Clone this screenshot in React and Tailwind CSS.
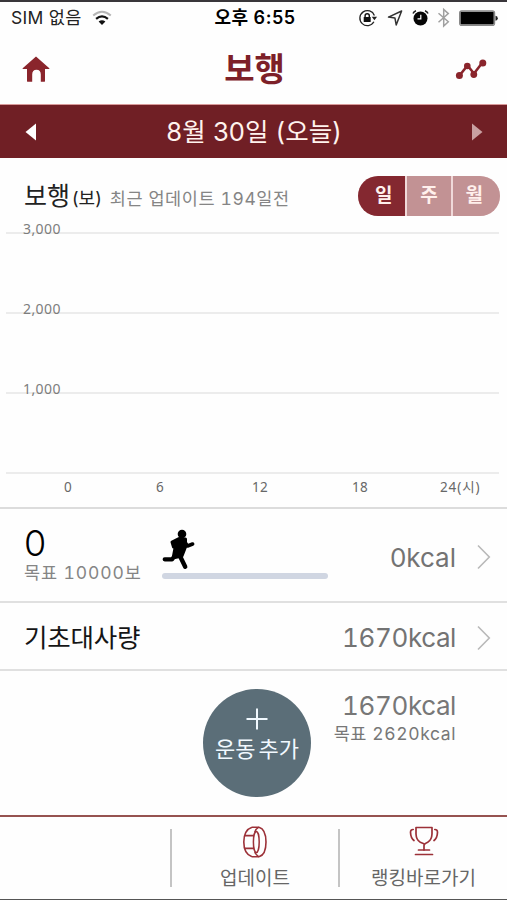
import React, { useState } from "react";

const HomeIcon = () => (
    <svg width="28" height="27" viewBox="0 0 28 27" fill="#8a252c">
        <path d="M14 .5 27.3 12.2q.5.8-.6.9H23v11.8q0 .9-.9.9h-3.300v-7.300q0-4.700-4.300-4.700t-4.300 4.700v7.300H5.900q-.9 0-.9-.9V13.100H1.300q-1.100-.1-.6-.9z" />
    </svg>
);

const TrendIcon = () => (
    <svg width="32" height="22" viewBox="0 0 32 22" fill="#8a252c">
        <path d="M4.500 17.500 12.500 7.500 19 15.500 27.500 4.500" fill="none" stroke="#8a252c" strokeWidth="2.600" />
        <circle cx="4.400" cy="17.500" r="3.500" />
        <circle cx="12.300" cy="8" r="3.300" />
        <circle cx="18.800" cy="16.500" r="3.400" />
        <circle cx="27.800" cy="5" r="3.500" />
    </svg>
);

const WifiIcon = () => (
    <svg width="20" height="16" viewBox="0 0 20 16" fill="none">
        <path d="M1.200 5.600Q10-2.200 18.800 5.600" stroke="#b5b5b5" strokeWidth="2" />
        <path d="M4.100 8.800q5.900-5 11.800 0" stroke="#111" strokeWidth="2.200" />
        <path d="M10 15 6.600 11.500q3.400-2.600 6.800 0z" fill="#111" />
    </svg>
);

const StatusIcons = () => (
    <svg width="141" height="22" viewBox="0 0 141 22" fill="none">
        {/* rotation lock */}
        <path d="M15.900 14.800A7.500 7.500 0 1 1 16.400 8.500" stroke="#222" strokeWidth="1.300" />
        <path d="M13.700 9.700h5.400l-2.700 3.500z" fill="#222" />
        <rect x="5.700" y="10" width="7" height="5" rx=".6" fill="#111" />
        <path d="M7.100 10.500V8.700q0-2 2.100-2t2.100 2v1.800" stroke="#111" strokeWidth="1.400" />
        {/* location */}
        <path d="M43.600 4 30.500 10.100l6.400.8 1.300 7z" stroke="#333" strokeWidth="1.500" strokeLinejoin="round" />
        {/* alarm */}
        <circle cx="62.500" cy="11.500" r="7" fill="#050505" />
        <path d="M62.800 7.700v4.200h-3.300" stroke="#fff" strokeWidth="1.200" />
        <path d="M55 6.600q.8-2.100 3-2.800M70 6.600q-.8-2.100-3-2.800" stroke="#222" strokeWidth="1.500" />
        {/* bluetooth */}
        <path d="M80.500 6.200 90.300 14.700 85.700 19V2.500l4.600 4.100-9.800 8.600" stroke="#a0a0a0" strokeWidth="1.500" />
        {/* battery */}
        <rect x="101.600" y="3.900" width="35" height="14.600" rx="2.200" stroke="#888" strokeWidth="1.200" />
        <rect x="102.500" y="4.800" width="33.200" height="12.800" rx="1" fill="#000" />
        <path d="M137.500 8.700q2.300.4 2.300 2.500t-2.300 2.500z" fill="#222" />
    </svg>
);

const RunnerIcon = () => (
    <svg width="34" height="42" viewBox="0 0 34 42" fill="none" stroke="#000" strokeLinecap="round" strokeLinejoin="round">
        <circle cx="20" cy="5" r="4.300" fill="#000" stroke="none" />
        <path d="M17 9.500 10 13 11.500 18 13.300 17.500 11.500 27 13 28.500 20 27 23.500 18 23.500 10z" fill="#000" strokeWidth="3" />
        <path d="M22.500 12.500 25.500 17 30.600 15" strokeWidth="3.600" />
        <path d="M17.500 26 23.200 37.800" strokeWidth="4.400" />
        <path d="M13.500 26 10 30.300H2.700" strokeWidth="4.200" />
    </svg>
);

const Chevron = () => (
    <svg width="14" height="26" viewBox="0 0 14 26" fill="none" stroke="#b9b9b9" strokeWidth="1.600">
        <path d="M1 1.500 12.300 13 1 24.500" />
    </svg>
);

const BandIcon = () => (
    <svg width="26" height="32" viewBox="0 0 26 32" fill="none" stroke="#9c3138" strokeWidth="1.600">
        <path d="M10 1.200h7M10 30.800h7" />
        <path d="M10 1.200Q1.800 4 1.800 16T10 30.800" />
        <path d="M17 1.200q7 2 7 14.800t-7 14.800" />
        <path d="M17 1.200q-3 1.300-4.300 5M17 30.800q-3-1.300-4.300-5" strokeWidth="1.400" />
        <ellipse cx="14.300" cy="16" rx="2.900" ry="10.500" strokeWidth="1.500" />
        <path d="M3 9.700h9M3 22.300h9" strokeWidth="1.700" />
    </svg>
);

const TrophyIcon = () => (
    <svg width="30" height="30" viewBox="0 0 30 30" fill="none" stroke="#9c3138" strokeWidth="1.700" strokeLinecap="round" strokeLinejoin="round">
        <path d="M7 1.500h16V8q-.3 6-4.300 8.300-3.700 1.500-3.700 3.200V24M7 1.500V8q.3 6 4.300 8.300l3 1.200" />
        <path d="M4.200 3.500q-2.500-.2-2.700 2.700.2 5.800 3.500 8.300M25.800 3.500q2.500-.2 2.700 2.700-.2 5.800-3.500 8.300" />
        <path d="M9.500 24h11M6.500 28.500h17" />
    </svg>
);

const periods = ["일", "주", "월"];
const gridRows = ["3,000", "2,000", "1,000"];

const App = () => {
    const [period, setPeriod] = useState("일");

    return (
        <div className="w-[507px] h-[900px] flex flex-col overflow-hidden bg-[#fefefe] border-t-2 border-b border-t-[#39363a] border-b-[#555] font-['Inter','Noto_Sans_CJK_KR',sans-serif] whitespace-nowrap">
            {/* Status bar */}
            <div className="h-8 grid grid-cols-[1fr_auto_1fr] items-center pl-[11px] pr-2 leading-8 text-[#222]">
                <div className="flex items-center gap-2.5">
                    <span className="text-[17.500px] tracking-[0.3px]">SIM 없음</span>
                    <WifiIcon />
                </div>
                <span className="font-semibold text-black text-[18px] tracking-[0.5px]">오후 6:55</span>
                <div className="flex justify-end">
                    <StatusIcons />
                </div>
            </div>

            {/* Header */}
            <header className="h-[71px] shrink-0 grid grid-cols-3 items-center pl-[22px] pr-5 border-b border-[#d99a9a]">
                <HomeIcon />
                <h1 className="text-center text-[33px] leading-10 font-bold text-[#7d2028]">보행</h1>
                <div className="flex justify-end">
                    <TrendIcon />
                </div>
            </header>

            {/* Date */}
            <div className="h-[53px] shrink-0 flex items-center justify-between pl-[25px] pr-6 bg-[#701f25] text-[#fff3ee]">
                <svg width="11" height="18" viewBox="0 0 11 18" fill="#fff">
                    <path d="M11 .5v17L.5 9z" />
                </svg>
                <span className="text-[25.500px] leading-[52px] tracking-[0.1px]">8월 30일 (오늘)</span>
                <svg width="11" height="18" viewBox="0 0 11 18" fill="#c9a0a2">
                    <path d="M0 .5v17L10.500 9z" />
                </svg>
            </div>

            {/* Chart */}
            <section className="h-[351px] shrink-0 pt-[18px] pl-[6px] pr-2 border-b-2 border-[#dcdcdc]">
                <div className="flex items-center justify-between h-10 pl-[18px]">
                    <div className="flex items-baseline text-[#222]">
                        <span className="text-[25px] leading-10">보행</span>
                        <span className="text-[18px] ml-[2px]">(보)</span>
                        <span className="text-[17.500px] ml-2 tracking-[0.6px] tabular-nums text-[#858585]">최근 업데이트 194일전</span>
                    </div>
                    <div className="flex w-[142px] h-10 -mr-px rounded-full overflow-hidden gap-0.5 bg-[#f0d9d9]">
                        {periods.map((p) => (
                            <button
                                key={p}
                                className={`flex-1 text-[19px] font-bold text-[#fff0ec] first:pl-1 last:pr-1 ${p === period ? "bg-[#842830]" : "bg-[#c29294]"}`}
                                onClick={() => setPeriod(p)}
                            >
                                {p}
                            </button>
                        ))}
                    </div>
                </div>
                <div className="mt-4 border-b-2 border-[#ececec] h-[242px] flex flex-col">
                    {gridRows.map((label) => (
                        <div key={label} className="h-20 shrink-0 border-t-2 border-[#ececec] relative">
                            <span className="absolute left-[17px] -top-[15px] text-[14px] leading-5 tracking-[0.4px] text-[#7d7d7d] font-['Noto_Sans']">{label}</span>
                        </div>
                    ))}
                </div>
                <div className="flex pt-[3px] pl-[58px] text-[13.500px] leading-5 tracking-[0.4px] text-[#686868] font-['Noto_Sans','Noto_Sans_CJK_KR']">
                    <span className="w-[92px]">0</span>
                    <span className="w-[96px]">6</span>
                    <span className="w-[100px]">12</span>
                    <span className="w-[88px]">18</span>
                    <span className="tracking-[0.9px]">24(시)</span>
                </div>
            </section>

            {/* Steps */}
            <div className="h-[94px] shrink-0 flex items-center pl-6 pr-4 border-b-2 border-[#e0e0e0]">
                <div className="w-[138px]">
                    <div className="text-[36px] leading-[36px] text-black font-light">0</div>
                    <div className="text-[17.500px] leading-6 tracking-[0.9px] tabular-nums text-[#858585]">목표 10000보</div>
                </div>
                <div className="w-[166px] pb-[3px]">
                    <RunnerIcon />
                    <div className="h-1.5 mt-0.5 rounded-full bg-[#d0d6e2]" />
                </div>
                <div className="flex-1 flex items-center justify-end gap-[21px] text-[26px] text-[#737373] pt-1">
                    <span>0kcal</span>
                    <Chevron />
                </div>
            </div>

            {/* Basal metabolism */}
            <div className="h-[68px] shrink-0 flex items-center pl-6 pr-4 pt-[3px] border-b-2 border-[#e0e0e0]">
                <span className="text-[25.500px] leading-8 tracking-[-0.2px] text-[#151515]">기초대사량</span>
                <div className="flex-1 flex items-center justify-end gap-[21px] text-[26px] tabular-nums text-[#737373]">
                    <span className="tracking-[-0.4px]">1670kcal</span>
                    <Chevron />
                </div>
            </div>

            {/* Total */}
            <div className="flex-1 grid grid-cols-[203px_108px_1fr] pr-[51px]">
                <button className="col-start-2 mt-[18px] size-[108px] rounded-full bg-[#5b6e78] text-[#f1f9ff] flex flex-col items-center pt-[19px]">
                    <svg width="22" height="22" viewBox="0 0 22 22" stroke="#f1f9ff" strokeWidth="2">
                        <path d="M11 .5v21M.5 11h21" />
                    </svg>
                    <span className="text-[22px] leading-8 mt-[3px] [word-spacing:-3px]">운동 추가</span>
                </button>
                <div className="text-right text-[#777] tabular-nums pt-[19px]">
                    <div className="text-[26px] leading-8 tracking-[-0.4px]">1670kcal</div>
                    <div className="text-[17.500px] leading-6 tracking-[0.6px]">목표 2620kcal</div>
                </div>
            </div>

            {/* Bottom menu */}
            <nav className="h-[84px] shrink-0 grid grid-cols-[170px_168px_1fr] border-t-2 border-[#965350] text-[19px] text-[#666]">
                <div />
                <div className="mt-3 h-[58px] border-l-2 border-[#c4c4c4] flex flex-col items-center">
                    <div className="-mt-[3px] h-[33px] shrink-0">
                        <BandIcon />
                    </div>
                    <span className="leading-7 mt-1.5">업데이트</span>
                </div>
                <div className="mt-3 h-[58px] border-l-2 border-[#c4c4c4] flex flex-col items-center">
                    <div className="-mt-[3px] h-[33px] shrink-0">
                        <TrophyIcon />
                    </div>
                    <span className="leading-7 mt-1.5">랭킹바로가기</span>
                </div>
            </nav>
        </div>
    );
};

export default App;
